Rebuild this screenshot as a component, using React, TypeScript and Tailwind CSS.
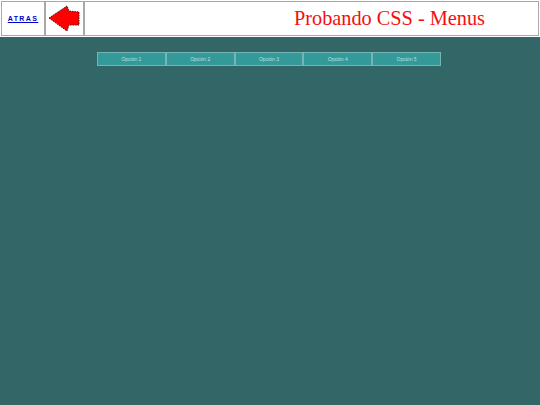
import React from 'react';

const opciones = ['Opción 1', 'Opción 2', 'Opción 3', 'Opción 4', 'Opción 5'];

function Flecha() {
    return (
        <svg width="32" height="27" viewBox="0 0 32 27">
            <polygon
                points="1,13 19,1 21,6 31,7 31,20 21,20 19,26"
                fill="#ff0000"
                stroke="#222222"
                strokeWidth="1"
                strokeDasharray="1.5 1"
            />
        </svg>
    );
}

export default function App() {
    return (
        <div className="w-[540px] h-[405px] overflow-hidden bg-[#336666] font-['Liberation_Sans',sans-serif]">
            {/* Cabecera */}
            <div className="h-[37px] bg-white p-px flex">
                <div className="w-[44px] shrink-0 border border-[#a8a8a8] pt-px flex items-center justify-center">
                    <a href="#" className="text-[7px] font-bold tracking-[1.4px] text-[#0000cc] underline">ATRAS</a>
                </div>
                <div className="w-[39px] shrink-0 border border-[#a8a8a8] pr-[2px] flex items-center justify-center">
                    <Flecha />
                </div>
                <div className="flex-1 border border-[#a8a8a8] pl-[209px] flex items-center">
                    <span className="font-['Liberation_Serif',serif] text-[20.3px] leading-none text-[#f50f0f] whitespace-nowrap">Probando CSS - Menus</span>
                </div>
            </div>

            {/* Menu */}
            <div className="mt-[15px] ml-[97px] w-[344px] flex">
                {opciones.map((o) => (
                    <a
                        key={o}
                        href="#"
                        className="flex-1 h-[14px] pt-px flex items-center justify-center bg-[#339999] border border-[#77b5b5] text-[5px] text-[#bfe0e0]"
                    >
                        {o}
                    </a>
                ))}
            </div>
        </div>
    );
}
